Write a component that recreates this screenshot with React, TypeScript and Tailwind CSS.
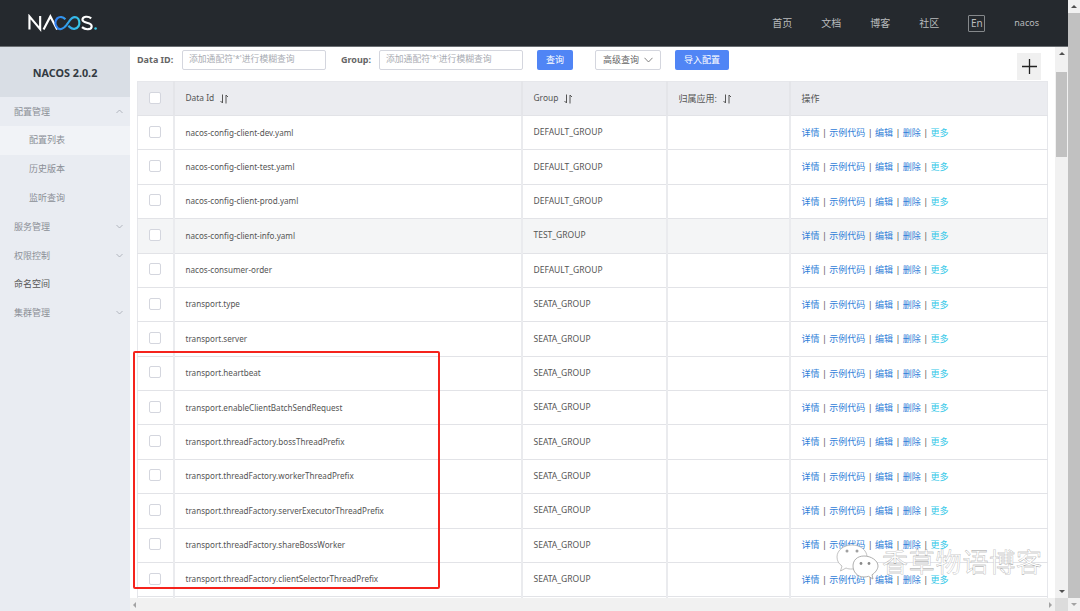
import React from 'react';

const rows = [
  { id: 'nacos-config-client-dev.yaml', group: 'DEFAULT_GROUP' },
  { id: 'nacos-config-client-test.yaml', group: 'DEFAULT_GROUP' },
  { id: 'nacos-config-client-prod.yaml', group: 'DEFAULT_GROUP' },
  { id: 'nacos-config-client-info.yaml', group: 'TEST_GROUP', hover: true },
  { id: 'nacos-consumer-order', group: 'DEFAULT_GROUP' },
  { id: 'transport.type', group: 'SEATA_GROUP' },
  { id: 'transport.server', group: 'SEATA_GROUP' },
  { id: 'transport.heartbeat', group: 'SEATA_GROUP' },
  { id: 'transport.enableClientBatchSendRequest', group: 'SEATA_GROUP' },
  { id: 'transport.threadFactory.bossThreadPrefix', group: 'SEATA_GROUP' },
  { id: 'transport.threadFactory.workerThreadPrefix', group: 'SEATA_GROUP' },
  { id: 'transport.threadFactory.serverExecutorThreadPrefix', group: 'SEATA_GROUP' },
  { id: 'transport.threadFactory.shareBossWorker', group: 'SEATA_GROUP' },
  { id: 'transport.threadFactory.clientSelectorThreadPrefix', group: 'SEATA_GROUP' },
  { id: '', group: '' },
];

const navItems = ['首页', '文档', '博客', '社区'];

function Logo() {
  return (
    <svg width="70" height="17.5" viewBox="0 0 72 18" fill="none" aria-label="NACOS">
      <defs>
        <linearGradient id="logoBlue" x1="0" y1="0" x2="1" y2="0">
          <stop offset="0" stopColor="#2f7df0" />
          <stop offset="1" stopColor="#37c8e8" />
        </linearGradient>
      </defs>
      <path d="M1.500 16V2.500L12.500 15.500V2" stroke="#fff" strokeWidth="2.200" />
      <path d="M16 16L23 2.500L30 16" stroke="#fff" strokeWidth="2.200" />
      <path
        d="M38.500 5.500C36 3 32.500 2 30 4.500C27 7.500 28 12 30.500 14.500C33 16.500 36.500 15.500 39.500 11.500L42 8C44.500 4 47.500 2.500 50 3.500C53 5 53.500 9.500 52 12.500C50 16 45.500 16 43 13.500L41.500 12"
        stroke="url(#logoBlue)"
        strokeWidth="2.200"
      />
      <path d="M65 4.500C62 1.800 56 2.300 56 6C56 10 65.500 8 65.500 12.500C65.500 16.500 59 16.500 55.500 13.500" stroke="#fff" strokeWidth="2.200" />
      <circle cx="69.500" cy="15" r="1.300" fill="#37c8e8" />
    </svg>
  );
}

function SortIcon() {
  return (
    <svg width="9" height="10" viewBox="0 0 9 10" fill="none" stroke="#555" strokeWidth="1" className="ml-[6px] inline-block">
      <path d="M2.500 0.500V9L0.500 7" />
      <path d="M6 9.500V1L8 3" />
    </svg>
  );
}

function Chevron({ up }: { up?: boolean }) {
  return (
    <svg width="7" height="5" viewBox="0 0 7 5" fill="none" stroke="#a3a9b3" strokeWidth="0.800">
      <path d={up ? 'M0.500 4L3.500 1L6.500 4' : 'M0.500 1L3.500 4L6.500 1'} />
    </svg>
  );
}

function Checkbox() {
  return <span className="-mt-[2px] block h-3 w-3 rounded-[2px] border border-[#d4d6de] bg-white" />;
}

function SideItem({ label, chevron, up, dark }: { label: string; chevron?: boolean; up?: boolean; dark?: boolean }) {
  return (
    <div className={`flex h-[28.8px] items-center justify-between pl-[14px] pr-[7px] ${dark ? 'text-[#555]' : 'text-[#8b8f96]'}`}>
      <span>{label}</span>
      {chevron && <Chevron up={up} />}
    </div>
  );
}

function SubItem({ label, active }: { label: string; active?: boolean }) {
  return (
    <div className={`flex h-[28.8px] items-center pl-[29px] text-[#8b8f96] ${active ? 'bg-[#f1f3f7]' : ''}`}>{label}</div>
  );
}

function Actions() {
  const sep = <span className="mx-[2.4px] text-[#555]">|</span>;
  return (
    <span className="text-[#2f80d8]">
      详情{sep}示例代码{sep}编辑{sep}删除{sep}
      <span className="text-[#33c8e8]">更多</span>
    </span>
  );
}

function SearchInput() {
  return (
    <div className="flex h-5 w-[144px] items-center rounded-[2px] border border-[#d4d6de] pl-[6px] text-[8.8px] text-[#a8abb2]">
      添加通配符'*'进行模糊查询
    </div>
  );
}

function ScrollArrow({ dir, light }: { dir: 'up' | 'down' | 'left' | 'right'; light?: boolean }) {
  const cls = {
    up: 'border-x-[3px] border-b-[3px] border-x-transparent border-b-[#505050]',
    down: light
      ? 'border-x-[3px] border-t-[3px] border-x-transparent border-t-[#a3a3a3]'
      : 'border-x-[3px] border-t-[3px] border-x-transparent border-t-[#505050]',
    left: 'border-y-[3px] border-r-[3px] border-y-transparent border-r-[#a3a3a3]',
    right: 'border-y-[3px] border-l-[3px] border-y-transparent border-l-[#a3a3a3]',
  }[dir];
  return <span className={`block h-0 w-0 ${cls}`} />;
}

export default function App() {
  return (
    <div className="relative flex h-[611px] w-[1080px] overflow-hidden bg-white font-['Noto_Sans','Noto_Sans_CJK_SC',sans-serif] text-[9px] text-[#555]">
      <div className="flex min-w-0 flex-1 flex-col">
        <header className="flex h-[47px] shrink-0 items-center justify-between border-b border-[#6a6e72] bg-[#25292e] pl-[28px] pr-[29px]">
          <Logo />
          <div className="flex items-center text-[10px] text-[#b9bbbd]">
            {navItems.map((item) => (
              <span key={item} className="mr-[29px]">{item}</span>
            ))}
            <span className="mr-[29px] flex h-[17px] w-[17px] items-center justify-center rounded-[1px] border border-[#85888b] text-[10px]">En</span>
            <span className="text-[9px]">nacos</span>
          </div>
        </header>
        <div className="flex min-h-0 flex-1">
          <aside className="h-full w-[130px] shrink-0 bg-[#e9ecf2]">
            <div className="flex h-[50px] items-center justify-center bg-[#d9dee5] pt-[2px] text-[10.8px] font-bold text-[#333a42]">NACOS 2.0.2</div>
            <SideItem label="配置管理" chevron up />
            <SubItem label="配置列表" active />
            <SubItem label="历史版本" />
            <SubItem label="监听查询" />
            <SideItem label="服务管理" chevron />
            <SideItem label="权限控制" chevron />
            <SideItem label="命名空间" dark />
            <SideItem label="集群管理" chevron />
          </aside>
          <div className="flex min-w-0 flex-1 flex-col">
            <div className="flex min-h-0 flex-1">
              <div className="min-w-0 flex-1 overflow-hidden px-[7px]">
                <div className="relative flex h-[34px] items-start pt-[3px]">
                  <span className="mt-[3px] w-[45px] font-bold text-[#666]">Data ID:</span>
                  <SearchInput />
                  <span className="ml-[15px] mt-[3px] w-[38px] font-bold text-[#666]">Group:</span>
                  <SearchInput />
                  <span className="ml-[14px] flex h-5 w-9 items-center justify-center rounded-[2px] bg-[#5085f5] text-white">查询</span>
                  <span className="ml-[22px] flex h-5 w-[66px] items-center justify-center gap-[5px] rounded-[2px] border border-[#d4d6de] text-[#666]">
                    高级查询
                    <svg width="9" height="6" viewBox="0 0 9 6" fill="none" stroke="#666" strokeWidth="0.800"><path d="M0.500 0.800L4.500 5L8.500 0.800" /></svg>
                  </span>
                  <span className="ml-[14px] flex h-5 w-[54px] items-center justify-center rounded-[2px] bg-[#5085f5] text-white">导入配置</span>
                  <span className="absolute right-[7px] top-[6px] flex h-[27px] w-6 items-center justify-center bg-[#f0f0f0]">
                    <svg width="15" height="15" viewBox="0 0 15 15" stroke="#222" strokeWidth="1.300"><path d="M0 7.500H15M7.500 0V15" /></svg>
                  </span>
                </div>
                <table className="w-[911px] table-fixed border-collapse border border-[#e6e7eb]">
                  <colgroup>
                    <col className="w-[36px]" />
                    <col className="w-[348px]" />
                    <col className="w-[145px]" />
                    <col className="w-[123px]" />
                    <col />
                  </colgroup>
                  <thead>
                    <tr className="h-[34px] bg-[#ebecf0] text-left">
                      <th className="border-r-2 border-[#e4e5e9] pl-[11px] font-normal"><Checkbox /></th>
                      <th className="border-r-2 border-[#e4e5e9] pl-[11px] text-[8.4px] font-normal">Data Id<SortIcon /></th>
                      <th className="border-r-2 border-[#e4e5e9] pl-[11px] text-[8.4px] font-normal">Group<SortIcon /></th>
                      <th className="border-r-2 border-[#e4e5e9] pl-[11px] font-normal">归属应用:<SortIcon /></th>
                      <th className="pl-[11px] font-normal">操作</th>
                    </tr>
                  </thead>
                  <tbody>
                    {rows.map((row, i) => (
                      <tr key={i} className={`h-[34.38px] border-t border-[#e2e3e7] ${row.hover ? 'bg-[#f4f5f6]' : ''}`}>
                        <td className="border-r-2 border-[#eaebee] pl-[11px]"><Checkbox /></td>
                        <td className="border-r-2 border-[#eaebee] pl-[11px] text-[8.1px]">{row.id}</td>
                        <td className="border-r-2 border-[#eaebee] pl-[11px] text-[8.5px]">{row.group}</td>
                        <td className="border-r-2 border-[#eaebee]" />
                        <td className="pl-[11px]">{row.id && <Actions />}</td>
                      </tr>
                    ))}
                  </tbody>
                </table>
              </div>
              <div className="flex h-full w-[13px] shrink-0 flex-col bg-[#f1f1f1]">
                <div className="flex h-[13px] shrink-0 items-center justify-center"><ScrollArrow dir="up" /></div>
                <div className="mx-px mt-[12px] h-[85px] shrink-0 bg-[#c1c1c1]" />
                <div className="flex-1" />
                <div className="flex h-[13px] shrink-0 items-center justify-center"><ScrollArrow dir="down" /></div>
              </div>
            </div>
            <div className="flex h-[13px] shrink-0">
              <div className="flex flex-1 items-center justify-between bg-[#f1f1f1] px-[3px]">
                <ScrollArrow dir="left" />
                <ScrollArrow dir="right" />
              </div>
              <div className="w-[13px] bg-[#dcdcdc]" />
            </div>
          </div>
        </div>
      </div>
      <div className="flex h-full w-[12px] shrink-0 flex-col bg-[#f1f1f1]">
        <div className="flex h-[13px] shrink-0 items-center justify-center"><ScrollArrow dir="up" /></div>
        <div className="h-[585px] shrink-0 bg-[#c1c1c1]" />
        <div className="flex flex-1 items-center justify-center"><ScrollArrow dir="down" light /></div>
      </div>
      <div className="absolute left-[133px] top-[351px] h-[238px] w-[307px] rounded-[2px] border-2 border-[#f5231c]" />
      <div className="absolute left-[836px] top-[544px] flex items-center">
        <svg width="44" height="36" viewBox="0 0 44 36">
          <path d="M16 1C8 1 1 6 1 13C1 17 3 20 6 22L4.500 27L10 24C12 25 14 25 16 25C24 25 31 20 31 13C31 6 24 1 16 1Z" fill="#fff" stroke="#9a9a9a" strokeWidth="0.600" />
          <circle cx="11" cy="7" r="1.500" fill="#a0a0a0" />
          <circle cx="21" cy="7" r="1.500" fill="#a0a0a0" />
          <path d="M28 12C21 12 17 16.500 17 22C17 27.500 21 33 28 33C29.500 33 31 32.800 32.500 32.300L37 35L36 30.800C39 29 42 25.200 42 22C42 16.500 35 12 28 12Z" fill="#fff" stroke="#9a9a9a" strokeWidth="0.800" />
          <circle cx="25" cy="19.500" r="1.400" fill="#8a8a8a" />
          <circle cx="33" cy="19.500" r="1.400" fill="#8a8a8a" />
        </svg>
        <span className="ml-[2px] text-[26px] leading-none tracking-[0.8px] text-white [-webkit-text-stroke:0.3px_#999]">香草物语博客</span>
      </div>
    </div>
  );
}
